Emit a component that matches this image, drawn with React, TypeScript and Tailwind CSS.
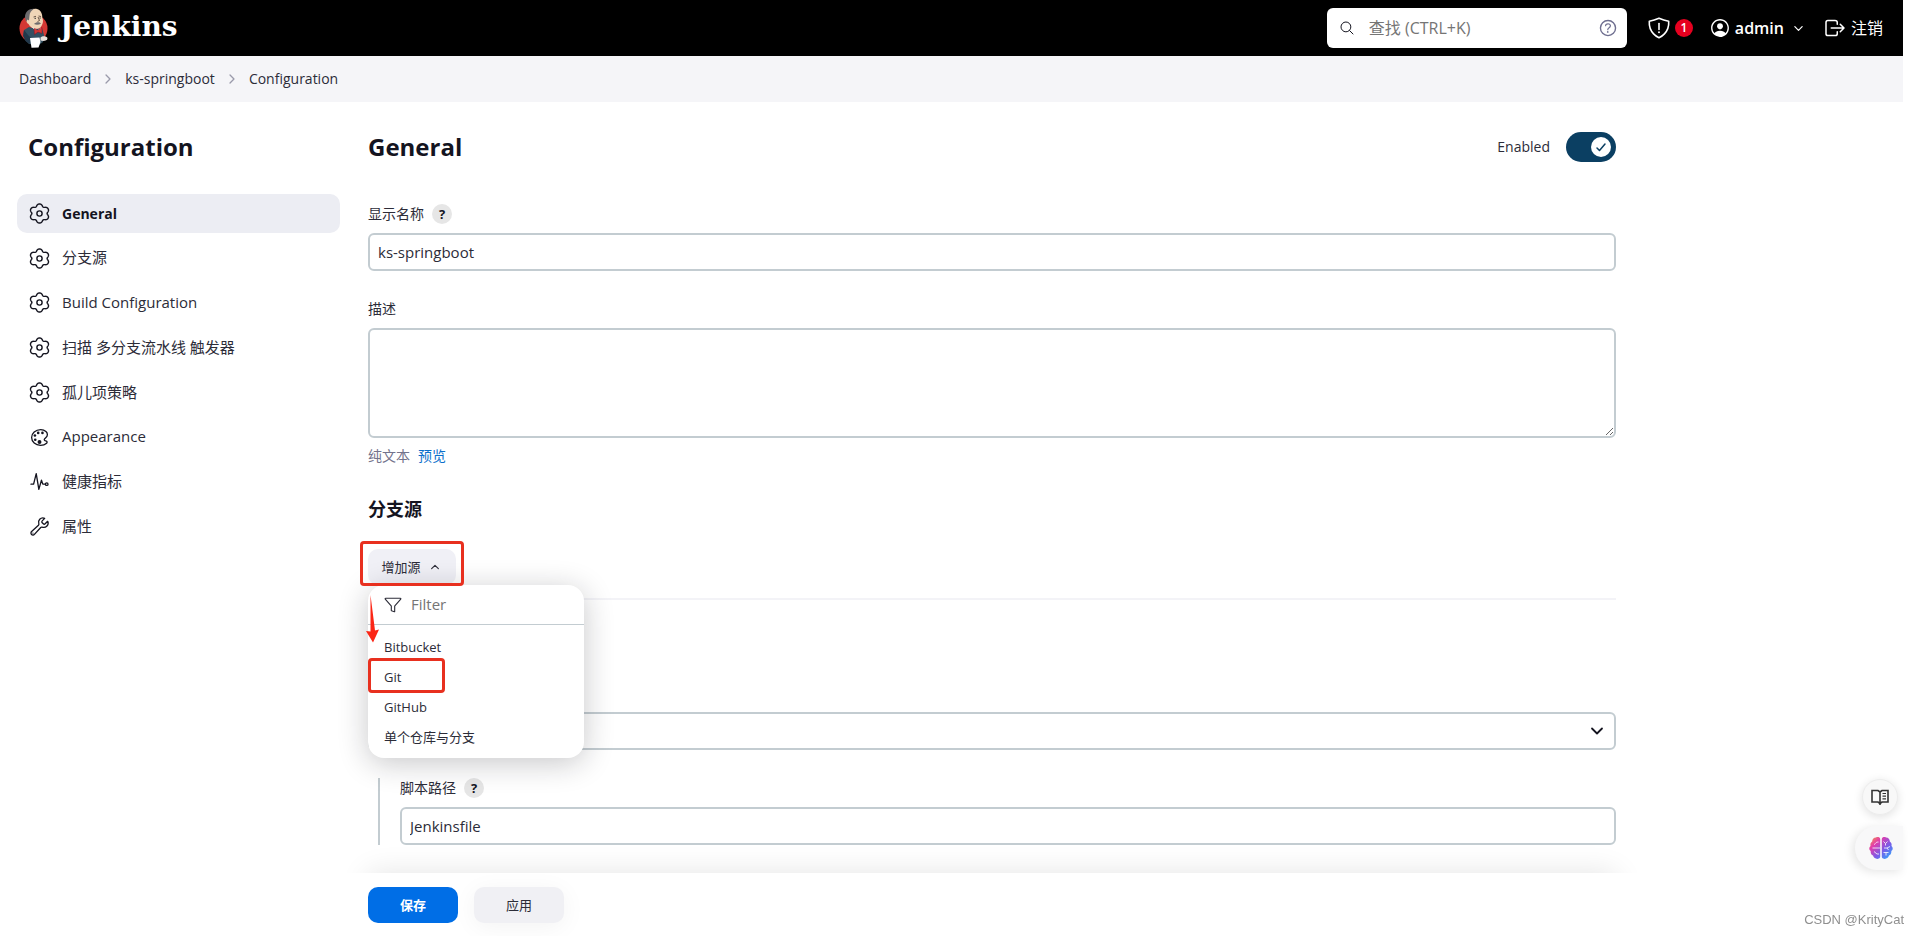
import type { ReactNode } from 'react';
import {
  IoBuildOutline,
  IoChevronDown,
  IoChevronForward,
  IoChevronUp,
  IoColorPaletteOutline,
  IoFunnelOutline,
  IoHelpCircleOutline,
  IoLogOutOutline,
  IoPersonCircleOutline,
  IoPulseOutline,
  IoSearchOutline,
} from 'react-icons/io5';

// Six-lobed cog outline, sampled around the circle.
const cogPath =
  Array.from({ length: 120 }, (_, i) => {
    const angle = (i / 120) * Math.PI * 2;
    const dip = ((1 - Math.cos(6 * angle)) / 2) ** 1.5;
    const radius = 9.5 - 2.2 * dip;
    const x = 10.5 + radius * 1.04 * Math.sin(angle);
    const y = 10.5 - radius * Math.cos(angle);
    return `${i === 0 ? 'M' : 'L'}${x.toFixed(2)} ${y.toFixed(2)}`;
  }).join('') + 'Z';

function CogIcon({ className }: { className?: string }) {
  return (
    <svg viewBox="0 0 21 21" className={className} fill="none" stroke="currentColor" strokeWidth="1.400" strokeLinejoin="round" aria-hidden="true">
      <path d={cogPath} />
      <circle cx="10.500" cy="10.500" r="2.600" />
    </svg>
  );
}

const sections = [
  { label: 'General', icon: CogIcon, active: true },
  { label: '分支源', icon: CogIcon },
  { label: 'Build Configuration', icon: CogIcon },
  { label: '扫描 多分支流水线 触发器', icon: CogIcon },
  { label: '孤儿项策略', icon: CogIcon },
  { label: 'Appearance', icon: IoColorPaletteOutline },
  { label: '健康指标', icon: IoPulseOutline },
  { label: '属性', icon: IoBuildOutline },
];

const field =
  'block w-full rounded-md border-2 border-[#c3ccd1] bg-white px-2 text-[15px] text-[#2c2c38] outline-none';

function JenkinsLogo() {
  return (
    <svg viewBox="0 0 30 40" className="h-10 w-[30px]" aria-hidden="true">
      <circle cx="14.500" cy="20.500" r="14" fill="#d33833" />
      <path d="M5 22 L10 19 L17 21 L23 20 L25 27 L24 34 L20 37 L10 36 L6 32 L4.500 26Z" fill="#335061" />
      <path d="M5 22 L4 28 L7 33.500 L11 36 L12 30 L9 27Z" fill="#22384a" />
      <path d="M10 5 C11 1.500 15 .3 18 1 C22 2 23.500 6 23.300 10 C25 13 23.500 19 19.500 20.500 C15.500 21.500 11 19.500 9.500 16 C7 14.500 7 11.500 8.500 11Z" fill="#f0d6b7" />
      <path d="M15 .8 C10 .5 6 4 6 9 L7 14 L8.500 11.500 L10 12.500 L10.500 8 C10.500 5 12.500 2.500 15 .8Z" fill="#6d6b6d" />
      <path d="M14.500 9 L17 8.300 M19.500 8 L22 8.500 M19 9 L20.500 12.500 L18.500 13.500" stroke="#49372d" strokeWidth=".8" fill="none" />
      <path d="M15.500 10.300h1.500M20.500 10h1.300" stroke="#222" strokeWidth=".9" />
      <path d="M15 16 C17 13.800 20.500 13.800 22 15.500 C20 16.800 17.500 17.200 15 16Z" fill="#6d6b6d" />
      <path d="M12.500 18.500 L18.500 22.500 L22 19.500 L22 22 L17.500 24Z" fill="#fff" />
      <path d="M15 20.500 L18.800 22.300 L23 19.500 L23 25.500 L19 24 L15.500 26.500Z" fill="#d33833" stroke="#81001f" strokeWidth=".4" />
      <path d="M11 30 L20.500 29.500 L21.500 34 L19.500 39.500 L12.500 39.800Z" fill="#fff" />
      <path d="M21.500 29.500 C23.500 27.500 27.500 28 28.500 30 C28.500 32.500 25 33.500 21.500 32.500Z" fill="#e8e0dc" />
    </svg>
  );
}

function ShieldIcon() {
  return (
    <svg viewBox="0 0 512 512" className="size-6" fill="none" stroke="currentColor" strokeWidth="34" strokeLinecap="round" strokeLinejoin="round" aria-hidden="true">
      <path d="M463.100 112.370C373.680 96.330 336.710 84.450 256 48c-80.710 36.450-117.680 48.330-207.100 64.370C32.700 369.130 240.580 457.790 256 464c15.420-6.210 223.300-94.870 207.100-351.630z" />
      <path d="M256 160v128" />
      <path d="M256 345v2" strokeWidth="42" />
    </svg>
  );
}

function BookIcon() {
  return (
    <svg viewBox="0 0 18 16" className="h-4 w-[18px]" fill="none" stroke="#333" strokeWidth="1.600" aria-hidden="true">
      <path d="M1 1.500h6l2 1.500 2-1.500h6v11.500H11L9 14.500 7 13H1zM9 3v13" />
      <path d="M11.500 4.500H15M11.500 7.200H15M11.500 9.900H15" strokeWidth="1.200" />
    </svg>
  );
}

function BrainIcon() {
  return (
    <svg viewBox="0 0 24 24" className="size-6" aria-hidden="true">
      <defs>
        <linearGradient id="brain" x1="0" y1="0" x2="1" y2="1">
          <stop offset="0" stopColor="#f7a03c" />
          <stop offset=".28" stopColor="#e33cab" />
          <stop offset=".6" stopColor="#7a5be8" />
          <stop offset="1" stopColor="#25b4ff" />
        </linearGradient>
      </defs>
      <path
        d="M11.200 3C11 1 8.500.5 7 1.500 4.500 1.500 3.200 3.500 3.200 5.500 1.500 6.500 1 8.500 1.600 10-.3 11.500 0 14 1.700 15 1.400 17.500 2.500 19 4 19.600 4.800 22.500 8 23.500 9.800 22.500c.9-.3 1.400-1 1.400-2zM12.800 3C13 1 15.500.5 17 1.500c2.500 0 3.800 2 3.800 4 1.700 1 2.200 3 1.600 4.500 1.900 1.500 1.600 4-.1 5 .3 2.500-.8 4-2.300 4.600-.8 2.900-4 3.900-5.800 2.900-.9-.3-1.400-1-1.400-2z"
        fill="url(#brain)"
      />
      <path
        d="M11 12H3.500M5 8.500C6.500 8.500 6 6 9.500 6M5 15.500l3 2.500h2M14.500 5.500l2 2 2-2M16.500 7.500v2M15 12h3l3-1.500M18 12l1.500 2M14.500 16.500h5M17 16.500v3"
        stroke="#fff"
        strokeOpacity=".8"
        fill="none"
      />
    </svg>
  );
}

function HelpButton({ topic }: { topic: string }) {
  return (
    <button
      type="button"
      aria-label={`Help for feature: ${topic}`}
      className="flex size-5 items-center justify-center rounded-full bg-[#e6e6e6] text-[13px] font-bold leading-5 text-[#14141f]"
    >
      ?
    </button>
  );
}

function FieldLabel({ id, children, help }: { id: string; children: string; help?: boolean }) {
  return (
    <div className="mb-[9px] flex h-5 items-center gap-2">
      <label htmlFor={id}>{children}</label>
      {help && <HelpButton topic={children} />}
    </div>
  );
}

function Crumb({ children, last }: { children: ReactNode; last?: boolean }) {
  return (
    <li className="flex items-center">
      <a href="#">{children}</a>
      {!last && <IoChevronForward className="mx-[10px] size-[14px] text-[#9a9aaa]" aria-hidden="true" />}
    </li>
  );
}

function SourceMenu() {
  return (
    <div className="absolute left-0 top-9 z-20 w-[216px] rounded-2xl bg-white pb-1.5 shadow-[0_5px_30px_rgba(20,20,31,0.24)]">
      <label className="flex h-10 items-center gap-[9px] border-b border-[#c3ccd1] pl-4">
        <IoFunnelOutline className="size-[18px]" aria-hidden="true" />
        <input
          aria-label="Filter"
          placeholder="Filter"
          className="w-36 bg-transparent text-[15px] outline-none placeholder:text-[#757575]"
        />
      </label>
      <ul className="pt-[7px] text-[13px] leading-5">
        {['Bitbucket', 'Git', 'GitHub', '单个仓库与分支'].map((source) => (
          <li key={source}>
            <button type="button" className="flex h-[30px] w-full items-center pl-4 text-left">
              {source}
            </button>
          </li>
        ))}
      </ul>
      <div className="pointer-events-none absolute left-0 top-[73px] h-[35px] w-[77px] rounded-sm border-3 border-[#e8301f]" />
      <svg viewBox="0 0 14 48" className="pointer-events-none absolute -left-0.5 top-2.5 h-12 w-3.5" aria-hidden="true">
        <path d="M4.500 0L9 35.500 13 34.500 7 47.500 0 36l4.500.500z" fill="#fb2616" />
      </svg>
    </div>
  );
}

export default function App() {
  return (
    <div className="min-h-screen bg-white pr-[17px] font-['Open_Sans','Noto_Sans_CJK_SC',sans-serif] text-sm text-[#2c2c38]">
      <header className="flex h-14 items-center bg-black pl-[19px] pr-5 text-white">
        <a href="#" className="flex items-center gap-[11px]">
          <JenkinsLogo />
          <span className="pb-0.5 font-['DejaVu_Serif',serif] text-[28px] font-bold leading-8">Jenkins</span>
        </a>
        <div className="ml-auto flex h-10 w-[300px] items-center rounded-md bg-white pl-3 pr-2 text-[#14141f]">
          <IoSearchOutline className="size-4" aria-hidden="true" />
          <input
            type="search"
            aria-label="查找"
            placeholder="查找 (CTRL+K)"
            className="ml-[14px] min-w-0 flex-1 bg-transparent text-base outline-none placeholder:text-[#757575]"
          />
          <a href="#" aria-label="Search help">
            <IoHelpCircleOutline className="size-[22px] text-[#6e6e8f]" />
          </a>
        </div>
        <button type="button" className="ml-5 flex items-center gap-1" aria-label="Security warnings">
          <ShieldIcon />
          <span className="flex size-[18px] items-center justify-center rounded-full bg-[#e6001f] text-xs font-semibold">1</span>
        </button>
        <button type="button" className="ml-4 flex items-center gap-1 text-base font-semibold">
          <IoPersonCircleOutline className="size-[22px]" aria-hidden="true" />
          admin
          <IoChevronDown className="ml-1 size-[13px]" aria-hidden="true" />
        </button>
        <a href="#" className="ml-[18px] flex items-center gap-1 text-base">
          <IoLogOutOutline className="size-6" aria-hidden="true" />
          注销
        </a>
      </header>

      <nav aria-label="Breadcrumb" className="flex h-[46px] items-center bg-[#f5f5f8] pl-[19px]">
        <ol className="flex items-center">
          <Crumb>Dashboard</Crumb>
          <Crumb>ks-springboot</Crumb>
          <Crumb last>Configuration</Crumb>
        </ol>
      </nav>

      <div className="flex gap-7 pl-[17px] pt-[29px]">
        <aside className="w-[323px] shrink-0">
          <h1 className="mb-[31px] pl-[11px] text-2xl font-bold leading-8 text-[#14141f]">Configuration</h1>
          <ul className="flex min-h-[352px] flex-col justify-between">
            {sections.map(({ label, icon: Icon, active }) => (
              <li key={label}>
                <a
                  href="#"
                  className={
                    active
                      ? 'flex h-[39px] items-center gap-3 rounded-[10px] bg-[#ecedf3] pl-3 font-bold text-[#14141f]'
                      : 'flex h-[39px] items-center gap-3 rounded-[10px] pl-3 text-[15px]'
                  }
                >
                  <Icon className="size-[21px] text-[#14141f]" aria-hidden="true" />
                  {label}
                </a>
              </li>
            ))}
          </ul>
        </aside>

        <main className="max-w-[1248px] flex-1">
          <div className="mb-[41px] flex h-8 items-center justify-between">
            <h2 className="text-2xl font-bold leading-8 text-[#14141f]">General</h2>
            <label className="flex items-center gap-4">
              Enabled
              <input type="checkbox" role="switch" defaultChecked className="peer sr-only" />
              <span className="flex h-[30px] w-[50px] items-center justify-end rounded-full bg-[#0b3f62] pr-[5px]">
                <span className="flex size-5 items-center justify-center rounded-full bg-white">
                  <svg viewBox="0 0 12 12" className="size-3" fill="none" stroke="#0b3f62" strokeWidth="1.500" strokeLinecap="round" strokeLinejoin="round" aria-hidden="true">
                    <path d="M2 7l2.500 2.500L10 3" />
                  </svg>
                </span>
              </span>
            </label>
          </div>

          <FieldLabel id="display-name" help>显示名称</FieldLabel>
          <input id="display-name" defaultValue="ks-springboot" className={`${field} mb-7 h-[38px]`} />

          <FieldLabel id="description">描述</FieldLabel>
          <textarea id="description" className={`${field} h-[110px] resize`} />
          <div className="mt-2 flex h-5 items-center gap-2 text-[#73738c]">
            纯文本
            <a href="#" className="text-[#0b6fcb]">预览</a>
          </div>

          <h2 className="mb-7 mt-[31px] text-lg font-semibold leading-6 text-[#14141f]">分支源</h2>
          <div className="relative mb-[13px] w-fit">
            <button type="button" aria-expanded="true" className="flex h-9 w-[88px] items-center justify-center gap-2 rounded-[10px] bg-[#f0f0f6] pr-0.5 text-[13px]">
              增加源
              <IoChevronUp className="size-3" aria-hidden="true" />
            </button>
            <SourceMenu />
            <div className="pointer-events-none absolute -left-2 -top-2 z-30 h-[45px] w-[104px] rounded-sm border-3 border-[#e8301f]" />
          </div>
          <hr className="mb-28 border-t-2 border-[#f3f3f7]" />

          <div className="relative mb-7">
            <select aria-label="Mode" className={`${field} h-[38px] appearance-none`}>
              <option></option>
            </select>
            <svg viewBox="0 0 14 14" className="pointer-events-none absolute right-3 top-3 size-[14px]" fill="none" stroke="#14141f" strokeWidth="1.800" strokeLinecap="round" strokeLinejoin="round" aria-hidden="true">
              <path d="M2 4.500l5 5 5-5" />
            </svg>
          </div>

          <div className="ml-[10px] border-l-2 border-[#c3ccd1] pl-5">
            <FieldLabel id="script-path" help>脚本路径</FieldLabel>
            <input id="script-path" defaultValue="Jenkinsfile" className={`${field} h-[38px]`} />
          </div>

          <div className="sticky bottom-0 mt-7 flex h-[63px] items-center gap-4 bg-white pt-px text-[13px]">
            <div className="pointer-events-none absolute -left-7 -right-7 bottom-full h-7 overflow-hidden px-7 pt-7" aria-hidden="true">
              <div className="h-16 shadow-[0_0_30px_rgba(0,0,0,0.11)]" />
            </div>
            <button type="submit" className="h-9 w-[90px] rounded-[10px] bg-[#006ee6] font-bold text-white">
              保存
            </button>
            <button type="button" className="h-9 w-[90px] rounded-[10px] bg-[#f0f0f4] shadow-[0_4px_24px_rgba(0,0,0,0.05)]">
              应用
            </button>
          </div>
        </main>
      </div>

      <div className="fixed bottom-[66px] right-[17px] z-40 flex w-12 flex-col gap-[11px]">
        <button type="button" aria-label="Reader" className="ml-[7px] flex size-9 items-center justify-center rounded-full border border-[#ececec] bg-[#f8f8f8] shadow-[0_2px_10px_rgba(0,0,0,0.12)]">
          <BookIcon />
        </button>
        <button type="button" aria-label="Assistant" className="flex h-11 items-center rounded-l-full bg-[#f8f8f9] pl-[14px] shadow-[-3px_2px_10px_rgba(0,0,0,0.10)]">
          <BrainIcon />
        </button>
      </div>
      <div className="fixed bottom-1.5 right-4 z-40 font-['Liberation_Sans',sans-serif] text-[13px] leading-5 text-[#8f8f8f]">
        CSDN @KrityCat
      </div>
    </div>
  );
}
